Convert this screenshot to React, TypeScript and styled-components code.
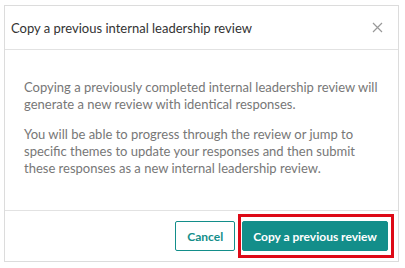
import React from 'react';
import styled, { createGlobalStyle } from 'styled-components';

const GlobalStyle = createGlobalStyle`
  html, body {
    margin: 0;
    padding: 0;
    background: #fff;
  }
  body {
    font-family: Lato, "Open Sans", Arial, sans-serif;
  }
`;

const Modal = styled.div`
  margin: 5px 6px 0 4px;
  width: 393px;
  border: 1px solid #dcdcdc;
  background: #fff;
  display: flex;
  flex-direction: column;
`;

const Header = styled.div`
  height: 43px;
  display: flex;
  align-items: center;
  justify-content: space-between;
  padding: 0 14px 0 6px;
  border-bottom: 1px solid #e2e2e2;
`;

const Title = styled.h2`
  margin: 0;
  font-size: 13px;
  font-weight: 400;
  color: #333;
`;

const CloseButton = styled.button`
  border: 0;
  background: none;
  padding: 0;
  width: 14px;
  height: 14px;
  display: flex;
  align-items: center;
  justify-content: center;
  cursor: pointer;
`;

const Body = styled.div`
  padding: 29px 14px 33px 19px;
  border-bottom: 1px solid #e2e2e2;
`;

const Paragraph = styled.p`
  margin: 0 0 13px;
  font-size: 13px;
  line-height: 17px;
  color: #777;
  &:last-child {
    margin-bottom: 0;
  }
`;

const Footer = styled.div`
  height: 50px;
  display: flex;
  align-items: center;
  justify-content: flex-end;
  gap: 3px;
  padding-right: 4px;
`;

const Button = styled.button<{ $primary?: boolean }>`
  height: 30px;
  padding: 0 ${(p) => (p.$primary ? '10px' : '11px')};
  border: 1px solid #138e8a;
  border-radius: 2px;
  background: ${(p) => (p.$primary ? '#138e8a' : '#fff')};
  color: ${(p) => (p.$primary ? '#fff' : '#138e8a')};
  font-family: Lato, Arial, sans-serif;
  font-size: 12px;
  font-weight: 700;
  cursor: pointer;
`;

const Highlight = styled.div`
  border: 3px solid #dd0a17;
  padding: 4px 3px 4px 1px;
  display: flex;
`;

export default function App() {
  return (
    <>
      <GlobalStyle />
      <Modal>
        <Header>
          <Title>Copy a previous internal leadership review</Title>
          <CloseButton aria-label="Close">
            <svg width="11" height="11" viewBox="0 0 11 11">
              <path d="M1 1L10 10M10 1L1 10" stroke="#999" strokeWidth="1.2" />
            </svg>
          </CloseButton>
        </Header>
        <Body>
          <Paragraph>
            Copying a previously completed internal leadership review will generate a new review
            with identical responses.
          </Paragraph>
          <Paragraph>
            You will be able to progress through the review or jump to specific themes to update
            your responses and then submit these responses as a new internal leadership review.
          </Paragraph>
        </Body>
        <Footer>
          <Button>Cancel</Button>
          <Highlight>
            <Button $primary>Copy a previous review</Button>
          </Highlight>
        </Footer>
      </Modal>
    </>
  );
}
